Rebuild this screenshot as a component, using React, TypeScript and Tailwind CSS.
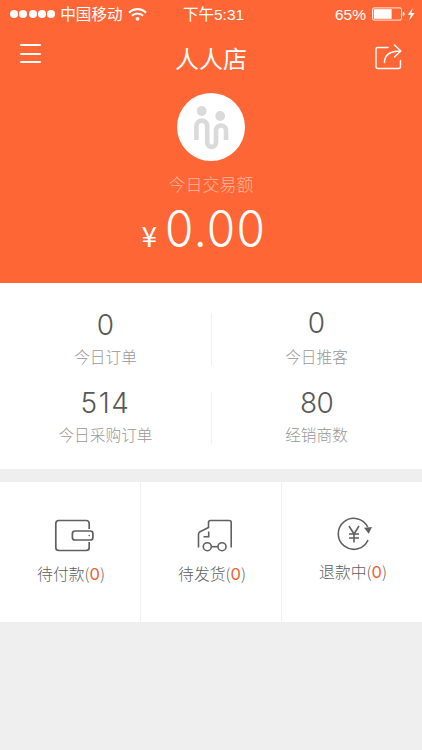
import React from 'react';

const stats = [
  { value: '0', label: '今日订单', pad: 'pt-[27px]', gap: 'mt-[5px]', tracking: 'tracking-normal' },
  { value: '0', label: '今日推客', pad: 'pt-[25px]', gap: 'mt-[7px]', tracking: 'tracking-normal' },
  { value: '514', label: '今日采购订单', pad: 'pt-[26px]', gap: 'mt-[5px]', tracking: 'tracking-[1.6px]' },
  { value: '80', label: '经销商数', pad: 'pt-[26px]', gap: 'mt-[5px]', tracking: 'tracking-[-0.6px]' },
];

function StatusBar() {
  return (
    <div className="relative flex h-[28px] items-center pl-[10px] pr-[6px] font-['Liberation_Sans','Noto_Sans_CJK_SC',sans-serif] text-[15.5px] leading-[28px]">
      <div className="flex gap-[1.3px]">
        {[0, 1, 2, 3, 4].map((i) => (
          <span key={i} className="h-2 w-2 rounded-full bg-white" />
        ))}
      </div>
      <span className="ml-[5px] mt-[2px] text-[15.6px]">中国移动</span>
      <svg className="ml-[5px]" width="19" height="13" viewBox="0 0 19 13" fill="none" stroke="white" strokeWidth="2.1">
        <path d="M1 4.7a12 12 0 0 1 17 0" />
        <path d="M4 7.7a7.8 7.8 0 0 1 11 0" />
        <circle cx="9.5" cy="10.8" r="1.9" fill="white" stroke="none" />
      </svg>
      <span className="absolute left-[183px] top-[1px]">下午5:31</span>
      <span className="ml-auto mt-px">65%</span>
      <svg className="ml-[6px]" width="44" height="14" viewBox="0 0 44 14" fill="none">
        <rect x="0.5" y="0.9" width="29" height="12.2" rx="1.5" stroke="white" strokeOpacity="0.85" />
        <rect x="1.8" y="2.2" width="17.8" height="9.6" fill="white" />
        <path d="M30.8 4.8c2.4.5 2.4 3.9 0 4.4z" fill="white" />
        <path d="M40.8 1L35.8 7.8h3l-1.4 5.4 5.2-7.2h-3.2z" fill="white" />
      </svg>
    </div>
  );
}

function Logo() {
  return (
    <div className="flex h-[68px] w-[68px] items-center justify-center rounded-full bg-white">
      <svg width="68" height="68" viewBox="0 0 68 68" fill="none">
        <circle cx="24.7" cy="18" r="4.9" fill="#dadada" />
        <circle cx="43.2" cy="23" r="4.9" fill="#dadada" />
        <path
          d="M19.4 47V33a5.4 5.4 0 0 1 10.8 0V49.5a4.4 4.4 0 0 0 8.8 0V37.5a5 5 0 0 1 10 0V47"
          stroke="#dadada"
          strokeWidth="4.6"
        />
      </svg>
    </div>
  );
}

function WalletIcon() {
  return (
    <svg width="40" height="36" viewBox="0 0 40 36" fill="none" stroke="#606060" strokeWidth="1.7">
      <path d="M35.2 11V5.5a3 3 0 0 0-3-3H4.8a3 3 0 0 0-3 3v24a3 3 0 0 0 3 3h27.4a3 3 0 0 0 3-3V24" />
      <rect x="18.4" y="13" width="20.5" height="9" rx="2.6" />
      <circle cx="35.2" cy="17.6" r="0.8" fill="#606060" stroke="none" />
    </svg>
  );
}

function TruckIcon() {
  return (
    <svg width="36" height="36" viewBox="0 0 36 36" fill="none" stroke="#606060" strokeWidth="1.6">
      <path d="M1.5 29.5V16.5c0-1.5.5-2.2 1.5-2.8L11.5 9.5V4.5a2 2 0 0 1 2-2h18.7a2 2 0 0 1 2 2v25" />
      <path d="M11.7 13.5V18.8H6.5" />
      <circle cx="10.3" cy="28.7" r="4" />
      <circle cx="25" cy="28.7" r="4" />
      <path d="M14.3 28.7h6.7" />
    </svg>
  );
}

function RefundIcon() {
  return (
    <svg width="36" height="36" viewBox="0 0 36 36" fill="none" stroke="#606060" strokeWidth="1.6">
      <path d="M32 24a15.5 15.5 0 1 1-.3-13" />
      <path d="M28 11.8l8-.9-3.3 6.8z" fill="#606060" stroke="none" />
      <path d="M13 10l5 8 5-8M18 18v8.5M13 18h10M13 22h10" />
    </svg>
  );
}

const orders = [
  { label: '待付款', count: 0, icon: <WalletIcon />, pad: 'pt-[36px]', shift: 'ml-[7px]' },
  { label: '待发货', count: 0, icon: <TruckIcon />, pad: 'pt-[36px]', shift: 'ml-[8px]' },
  { label: '退款中', count: 0, icon: <RefundIcon />, pad: 'pt-[34px]', shift: 'ml-[3px]' },
];

export default function App() {
  return (
    <main className="h-[750px] w-[422px] overflow-hidden bg-[#efefef] font-['Inter','Noto_Sans_CJK_SC',sans-serif]">
      {/* Header */}
      <header className="flex h-[283px] flex-col bg-[#ff6635] text-white">
        <StatusBar />
        <div className="flex h-[60px] items-center justify-between pl-5 pr-5">
          <button className="mb-[9px] flex w-[21px] flex-col gap-[6.5px]">
            <span className="h-[2px] rounded-full bg-white" />
            <span className="h-[2px] rounded-full bg-white" />
            <span className="h-[2px] rounded-full bg-white" />
          </button>
          <h1 className="ml-[7px] font-['Noto_Sans_CJK_SC',sans-serif] text-[24px] font-normal leading-[36px]">人人店</h1>
          <svg className="mb-[2px]" width="28" height="28" viewBox="0 0 28 28" fill="none" stroke="white" strokeWidth="1.4" strokeLinecap="round" strokeLinejoin="round">
            <path d="M14 4.5H3.5a1.5 1.5 0 0 0-1.5 1.5V23.5a2 2 0 0 0 2 2h20.5a2 2 0 0 0 2-2V17.5" />
            <path d="M10.5 19.5c0-7.5 5-11.5 16-11.5M20.5 2l6.3 6-6.3 6" />
          </svg>
        </div>
        <div className="flex flex-col items-center pt-[5px]">
          <Logo />
          <p className="mt-[10px] font-['Noto_Sans_CJK_SC',sans-serif] text-[17px] font-light leading-[25px] text-[#ffb79f]">今日交易额</p>
          <p className="mr-[5px] mt-px flex items-baseline leading-[64px]">
            <span className="mr-[8px] font-['Noto_Sans_CJK_SC',sans-serif] text-[28px]">¥</span>
            <span className="origin-left scale-x-[0.92] text-[50px] font-light tracking-[1.5px]">0.00</span>
          </p>
        </div>
      </header>

      {/* Today's figures */}
      <section className="grid h-[186px] grid-cols-[212px_1fr] bg-white">
        {stats.map((s, i) => (
          <div key={s.label} className={`relative flex flex-col items-center pr-px ${i < 2 ? 'h-[79px]' : 'h-[107px]'} ${s.pad}`}>
            <span className={`text-[28px] font-[350] leading-[30px] text-[#585858] ${s.tracking}`}>{s.value}</span>
            <span className={`${s.gap} font-['Noto_Sans_CJK_SC',sans-serif] text-[15.7px] font-light leading-[24px] text-[#999]`}>{s.label}</span>
            {i % 2 === 0 && <i className="absolute right-0 top-[30px] h-[52px] w-px bg-[#f0f0f0]" />}
          </div>
        ))}
      </section>

      {/* Orders by status */}
      <section className="mt-[13px] grid h-[140px] grid-cols-[141px_141px_1fr] divide-x divide-[#f0f0f0] bg-white">
        {orders.map((o) => (
          <div key={o.label} className={`flex flex-col items-center ${o.pad}`}>
            <div className={o.shift}>{o.icon}</div>
            <p className="ml-[2px] mt-[8px] flex font-['Noto_Sans_CJK_SC',sans-serif] text-[15.8px] font-light leading-[24px] text-[#606060]">
              {o.label}(<span className="font-['Inter',sans-serif] text-[16.5px] font-normal text-[#f4602f]">{o.count}</span>)
            </p>
          </div>
        ))}
      </section>
    </main>
  );
}
